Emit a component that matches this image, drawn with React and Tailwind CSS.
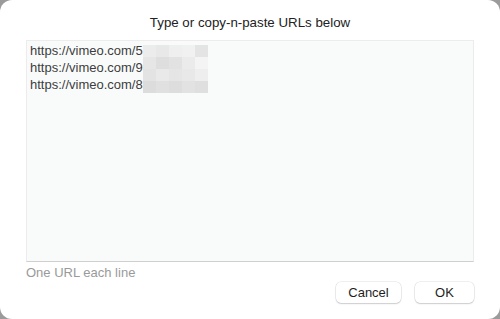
const font = { fontFamily: '"Liberation Sans", Arial, sans-serif' }

const mosaic = [
  ["#ececec", "#e8e8e8", "#efefef", "#f1f1f1", "#e4e4e4"],
  ["#e6e6e6", "#dedede", "#e2e2e2", "#ebebeb", "#f4f4f4"],
  ["#e3e3e3", "#e9e9e9", "#e5e5e5", "#e8e8e8", "#eeeeee"],
  ["#dcdcdc", "#e0e0e0", "#dddddd", "#e2e2e2", "#dfdfdf"],
]

export default function App() {
  const urls = ["https://vimeo.com/5", "https://vimeo.com/9", "https://vimeo.com/8"]
  return (
    <div className="h-[319px] w-[500px] bg-[#9b9b9b]" style={font}>
      <div className="flex h-full w-full flex-col rounded-[12px] bg-white px-[26px]">
        <div className="pt-[14px] pb-[9px] text-center text-[13.3px] leading-[17px] text-[#222]">
          Type or copy-n-paste URLs below
        </div>
        <div className="relative h-[222px] border border-[#ececec] border-b-[#cfcfcf] bg-[#f9fbfb] px-[3px] pt-[1px]">
          {urls.map((u, i) => (
            <div key={i} className="text-[13px] leading-[17px] text-[#3d3d3d]">
              {u}
            </div>
          ))}
          <div className="absolute left-[116px] top-[4px] flex flex-col">
            {mosaic.map((row, r) => (
              <div key={r} className="flex">
                {row.map((c, k) => (
                  <div
                    key={k}
                    className="h-[12px] w-[13px]"
                    style={{ backgroundColor: c }}
                  />
                ))}
              </div>
            ))}
          </div>
        </div>
        <div className="pt-[2px] text-[13px] leading-[17px] text-[#9a9a9a]">
          One URL each line
        </div>
        <div className="mt-[1px] flex justify-end gap-[14px]">
          <button className="h-[21px] w-[65px] rounded-[5px] bg-white text-[13px] text-[#1e1e1e] shadow-[0_0_0_0.5px_rgba(0,0,0,0.12),0_1px_1.5px_rgba(0,0,0,0.15)]">
            Cancel
          </button>
          <button className="h-[21px] w-[59px] rounded-[5px] bg-white text-[13px] text-[#1e1e1e] shadow-[0_0_0_0.5px_rgba(0,0,0,0.12),0_1px_1.5px_rgba(0,0,0,0.15)]">
            OK
          </button>
        </div>
      </div>
    </div>
  )
}
